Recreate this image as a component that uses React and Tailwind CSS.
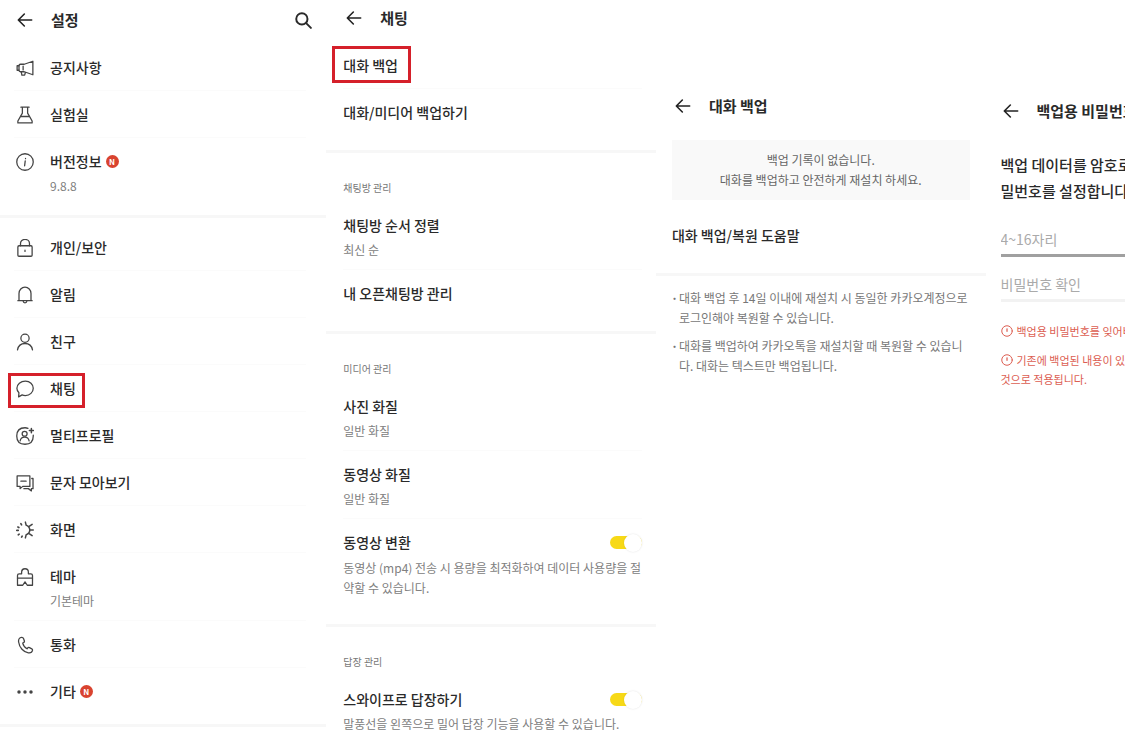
import React, { useState } from "react";

const Icon = ({ children, className = "w-[18px] h-[18px]" }) => (
  <svg
    className={`shrink-0 ${className}`}
    fill="none"
    stroke="currentColor"
    strokeWidth="1.7"
    strokeLinecap="round"
    strokeLinejoin="round"
    viewBox="0 0 24 24"
    aria-hidden="true"
  >
    {children}
  </svg>
);

const icons = {
  notice: (
    <>
      <path d="M22.500 3v18L11 17H6q-2 0-2-2V9q0-2 2-2h5z" />
      <path d="M4 9H1.500v6H4M9.500 9.500v5M7 17l.8 4.500h3.700L12.500 18" />
    </>
  ),
  lab: (
    <>
      <path d="M6.500 1.500h11M8.500 1.500v8L2.500 20v2.500h19V20L15.500 9.500v-8" />
      <path d="M6.500 14h11" />
    </>
  ),
  info: (
    <>
      <circle cx="12" cy="12" r="11" />
      <path d="M12.300 10.500l-.8 6.500M12.700 7.300v.2" />
    </>
  ),
  lock: (
    <>
      <rect x="2.500" y="9" width="19" height="14" rx="1.500" />
      <path d="M6 9V6a6 5.500 0 0 1 12 0v3M12 15v1.500" />
    </>
  ),
  bell: (
    <>
      <path d="M2.500 19.500h19M4 19.500V10a8 8.500 0 0 1 16 0v9.500" />
      <path d="M9.500 20c.3 3.300 4.700 3.300 5 0" />
    </>
  ),
  friend: (
    <>
      <circle cx="12" cy="7" r="5.500" />
      <path d="M2 22.500c1-5.500 4.700-8.500 10-8.500s9 3 10 8.500" />
    </>
  ),
  chat: (
    <path d="M12.500 1.500c6 0 10.500 4.200 10.500 9.500s-4.500 9.700-10.500 9.700c-1.600 0-3-.2-4.300-.8L3.500 22.500l.4-5.500C2 15.300 1.200 13.300 1.200 11c0-5.300 5-9.500 11.300-9.500z" />
  ),
  profile: (
    <>
      <path d="M16 1.800C14.800 1.300 13.500 1 12 1 4.500 1 1 4.500 1 12s3.500 11 11 11 11-3.500 11-11v-1" />
      <circle cx="11.500" cy="9" r="3.300" />
      <path d="M5.500 18.500c.7-3.500 2.700-5 6-5s5.300 1.500 6 5" />
      <path d="M20.500 2v5.500M17.800 4.700h5.400" strokeWidth="2" />
    </>
  ),
  sms: (
    <>
      <path d="M1.500 2.500h17v14H9L5.500 19.500v-3h-4z" />
      <path d="M21 6h1.700v13.500H20.500v3l-4-3h-6M6.500 9.500h7" />
    </>
  ),
  screen: (
    <>
      <path
        d="M13.500 5.500c6.500 3 6.500 10 0 13M12.500 1.500l1 4M12.500 22.500l1-4M17 7.500l4.500-3M18.500 12H23M17 16.500l4.500 3"
        strokeWidth="2"
      />
      <path
        d="M6.500 3.500l.9 1.600M2.500 8l1.300.7M1 12.500h2M3 18.500l1.200-.9M7.500 21.500l.7-1.300"
        strokeWidth="2.200"
      />
    </>
  ),
  theme: (
    <>
      <path d="M2 13.500V10q0-2.200 2.200-2.200H7.500V5.500a4.500 4.500 0 0 1 9 0v2.300h3.300Q22 7.800 22 10v3.500z" />
      <path d="M2 13.500V23h7l3-4.500 3 4.500h7v-9.500" />
    </>
  ),
  call: (
    <path d="M7.500 1.800C4.500 2 3 4.500 3.500 8c1 7.500 6.500 13.500 13 14.500 3 .4 5-1 5.500-3.200.2-1-.2-1.700-1-2.200l-3-1.600c-1-.5-1.900-.3-2.500.5l-.8 1c-3-1.500-5-4.300-5.700-7.500l1.300-.8c.8-.5 1.100-1.300.8-2.300L10 3.300c-.4-1.200-1.200-1.600-2.500-1.500z" />
  ),
  etc: (
    <g fill="currentColor" stroke="none">
      <circle cx="4" cy="12" r="2.300" />
      <circle cx="12" cy="12" r="2.300" />
      <circle cx="20" cy="12" r="2.300" />
    </g>
  ),
};

const infoMenu = [
  { icon: "notice", title: "공지사항" },
  { icon: "lab", title: "실험실" },
  { icon: "info", title: "버전정보", sub: "9.8.8", isNew: true },
];

const mainMenu = [
  { icon: "lock", title: "개인/보안" },
  { icon: "bell", title: "알림" },
  { icon: "friend", title: "친구" },
  { icon: "chat", title: "채팅", mark: "-left-1.5 top-2 w-[77px] h-[35px]" },
  { icon: "profile", title: "멀티프로필" },
  { icon: "sms", title: "문자 모아보기" },
  { icon: "screen", title: "화면" },
  { icon: "theme", title: "테마", sub: "기본테마" },
  { icon: "call", title: "통화" },
  { icon: "etc", title: "기타", isNew: true },
];

const NewBadge = () => (
  <span className="flex items-center justify-center w-[13px] h-[13px] ml-1 rounded-full bg-[#d9432f] text-white text-[8px] leading-none font-bold">
    N
  </span>
);

const Header = ({ title, className, children }) => (
  <header className={`flex items-center ${className}`}>
    <button type="button" aria-label="뒤로" className="text-[#222]">
      <Icon className="w-4 h-4">
        <path d="M22 12H2.500M11 3l-9 9 9 9" strokeWidth="2.400" />
      </Icon>
    </button>
    <h2 className="ml-[18px] text-[15px] font-bold whitespace-nowrap">{title}</h2>
    {children}
  </header>
);

const Divider = ({ className }) => (
  <hr className={`border-0 h-[3px] bg-[#f7f7f7] ${className}`} />
);

const Row = ({ icon, title, sub, isNew, mark }) => (
  <li className="relative border-b border-[#fbfbfb] last:border-transparent">
    <a href="#" className="flex pt-3 pb-[11px]">
      {icon && (
        <span className="flex items-center h-[23px] pl-0.5 mr-4 text-[#444]">
          <Icon>{icons[icon]}</Icon>
        </span>
      )}
      <span>
        <span className="flex items-center text-sm leading-[23px] font-medium">
          {title}
          {isNew && <NewBadge />}
        </span>
        {sub && (
          <span className="block mt-1 text-xs leading-[17px] text-[#808080]">{sub}</span>
        )}
      </span>
    </a>
    {mark && (
      <span className={`absolute border-3 border-[#d5202a] pointer-events-none ${mark}`} />
    )}
  </li>
);

const ToggleRow = ({ id, title, desc, descClass }) => {
  const [on, setOn] = useState(true);
  return (
    <li className="pt-3 pb-3">
      <div className="flex items-center justify-between h-[23px]">
        <label htmlFor={id} className="text-sm leading-[23px] font-medium">
          {title}
        </label>
        <input
          id={id}
          type="checkbox"
          checked={on}
          onChange={() => setOn(!on)}
          className="appearance-none flex items-center w-8 h-[13px] rounded-full bg-gray-300 checked:bg-[#f7d917] before:block before:w-[18px] before:h-[18px] before:rounded-full before:bg-white before:shadow-[0_0_2px_rgba(0,0,0,0.12)] checked:before:ml-auto"
        />
      </div>
      <p className={`mt-1 text-xs text-[#808080] whitespace-pre ${descClass}`}>{desc}</p>
    </li>
  );
};

const Group = ({ label, children }) => (
  <>
    <Divider className="mt-[14px]" />
    <h3 className="mt-[27px] mb-1.5 ml-[17px] text-[10px] leading-4 text-[#777]">{label}</h3>
    <ul className="ml-[17px] mr-[14px]">{children}</ul>
  </>
);

const Warning = ({ children }) => (
  <p className="mt-2.5 text-[11px] leading-[19px] text-[#dc5e52] whitespace-pre">
    <Icon className="inline-block align-[-1px] w-3 h-3 mr-1">
      <circle cx="12" cy="12" r="10.500" strokeWidth="2" />
      <path d="M12 7.500v5" strokeWidth="2.500" />
    </Icon>
    {children}
  </p>
);

export default function App() {
  return (
    <main className="flex min-h-screen overflow-hidden bg-white text-[#2a2a2a] font-['Noto_Sans_CJK_KR','Noto_Sans',sans-serif]">
      {/* Settings */}
      <section className="shrink-0 w-[29%]">
        <Header title="설정" className="h-10 mb-1 pl-[17px] pr-[14px]">
          <button type="button" aria-label="검색" className="ml-auto">
            <Icon>
              <circle cx="10.500" cy="10.500" r="7.500" strokeWidth="2.600" />
              <path d="M16.500 16.500l6 6" strokeWidth="2.600" />
            </Icon>
          </button>
        </Header>
        <ul className="ml-[14px] mr-5">
          {infoMenu.map((item) => (
            <Row key={item.title} {...item} />
          ))}
        </ul>
        <Divider className="mt-[9px] mb-1.5" />
        <ul className="ml-[14px] mr-5">
          {mainMenu.map((item) => (
            <Row key={item.title} {...item} />
          ))}
        </ul>
        <Divider className="mt-[9px]" />
      </section>

      {/* Chats */}
      <section className="shrink-0 w-[29.3%]">
        <Header title="채팅" className="h-9 mb-1.5 pl-5" />
        <ul className="ml-[17px] mr-[14px]">
          <Row title="대화 백업" mark="-left-[11px] top-1 w-[79px] h-[37px]" />
          <Row title="대화/미디어 백업하기" />
        </ul>
        <Group label="채팅방 관리">
          <Row title="채팅방 순서 정렬" sub="최신 순" />
          <Row title="내 오픈채팅방 관리" />
        </Group>
        <Group label="미디어 관리">
          <Row title="사진 화질" sub="일반 화질" />
          <Row title="동영상 화질" sub="일반 화질" />
          <ToggleRow
            id="convert"
            title="동영상 변환"
            desc={"동영상 (mp4) 전송 시 용량을 최적화하여 데이터 사용량을 절\n약할 수 있습니다."}
            descClass="leading-5"
          />
        </Group>
        <Group label="답장 관리">
          <ToggleRow
            id="swipe"
            title="스와이프로 답장하기"
            desc="말풍선을 왼쪽으로 밀어 답장 기능을 사용할 수 있습니다."
            descClass="leading-[17px]"
          />
        </Group>
      </section>

      {/* Chat backup */}
      <section className="shrink-0 w-[29.3%] pt-[86px]">
        <Header title="대화 백업" className="h-10 pl-[19px]" />
        <p className="mt-[14px] mx-4 py-2.5 bg-[#f9f9f9] text-center text-xs leading-5 text-[#666]">
          백업 기록이 없습니다.
          <br />
          대화를 백업하고 안전하게 재설치 하세요.
        </p>
        <ul className="mt-3 mx-4">
          <Row title="대화 백업/복원 도움말" />
        </ul>
        <Divider className="mt-[14px]" />
        <ul className="flex flex-col gap-2 mt-3 ml-[15px] text-xs leading-5 text-[#777] whitespace-pre">
          <li className="flex">
            <span className="w-2 font-bold">·</span>
            {"대화 백업 후 14일 이내에 재설치 시 동일한 카카오계정으로\n로그인해야 복원할 수 있습니다."}
          </li>
          <li className="flex">
            <span className="w-2 font-bold">·</span>
            {"대화를 백업하여 카카오톡을 재설치할 때 복원할 수 있습니\n다. 대화는 텍스트만 백업됩니다."}
          </li>
        </ul>
      </section>

      {/* Backup password, runs past the right edge */}
      <section className="shrink-0 w-[29.3%] pt-[91px]">
        <Header title="백업용 비밀번호" className="h-10 pl-[17px]" />
        <form className="mt-[21px] mx-[15px]">
          <p className="text-[15px] leading-[26px] font-medium whitespace-pre">
            {"백업 데이터를 암호로 보호하기 위해 비\n밀번호를 설정합니다."}
          </p>
          <input
            type="password"
            aria-label="비밀번호"
            placeholder="4~16자리"
            className="block w-full h-[33px] mt-5 border-b-3 border-[#a0a0a0] text-sm outline-none placeholder:text-[#aaa]"
          />
          <input
            type="password"
            aria-label="비밀번호 확인"
            placeholder="비밀번호 확인"
            className="block w-full h-[33px] mt-3 mb-5 border-b-3 border-[#f2f2f2] text-sm outline-none placeholder:text-[#aaa]"
          />
          <Warning>백업용 비밀번호를 잊어버리면 복원할 수 없습니다.</Warning>
          <Warning>{"기존에 백업된 내용이 있으면 새로운 비밀번호가\n것으로 적용됩니다."}</Warning>
        </form>
      </section>
    </main>
  );
}
